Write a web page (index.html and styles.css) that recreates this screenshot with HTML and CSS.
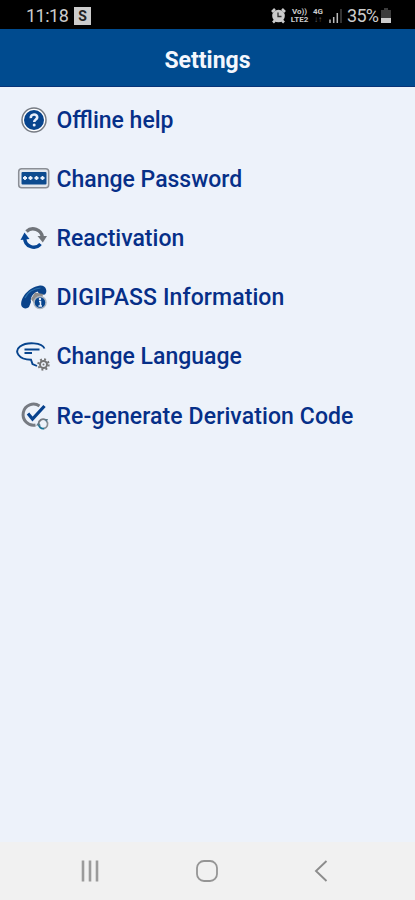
FILE: index.html
```html
<!DOCTYPE html>
<html lang="en">
<head>
	<meta charset="utf-8">
	<title>Settings</title>
	<link rel="stylesheet" href="styles.css">
</head>
<body>
	<div class="status">
		<span class="clock">11:18</span>
		<span class="badge">S</span>
		<div class="indicators">
			<svg class="alarm" width="15" height="16" viewBox="0 0 15 16">
				<path d="M1 4L4 1M14 4L11 1M2 14.500L4 12.500M13 14.500L11 12.500" stroke="#ccc" stroke-width="2.600"/>
				<circle cx="7.500" cy="8" r="6.300" fill="#ccc"/>
				<path d="M7 4.500V8.500H10.500" stroke="#333" stroke-width="1.300" fill="none"/>
			</svg>
			<div class="net volte"><span>Vo))</span><span>LTE2</span></div>
			<div class="net data"><span>4G</span><span class="dim">↓↑</span></div>
			<svg class="signal" width="13" height="15" viewBox="0 0 13 15">
				<path d="M1 11.500V15M4.700 9V15M8.300 5V15" stroke="#bbb" stroke-width="1.500"/>
				<path d="M12 1V15" stroke="#444" stroke-width="1.500"/>
			</svg>
			<span class="percent">35%</span>
			<svg width="10" height="15" viewBox="0 0 10 15">
				<path d="M3 0H7V2H10V10H0V2H3Z" fill="#3c3c3c"/>
				<path d="M0 10H10V15H0Z" fill="#ccc"/>
			</svg>
		</div>
	</div>
	<div class="header">Settings</div>
	<div class="menu">
		<div class="item">
			<svg class="icon" width="38" height="36" viewBox="0 0 38 36">
				<circle cx="19" cy="18" r="12" fill="#fff" stroke="#777c84" stroke-width="1.500"/>
				<circle cx="19" cy="18" r="10" fill="#07448d"/>
				<path d="M15.800 16.200C15.300 11.300 22.700 11.300 22.200 15.500C22 17.500 19.200 17.500 19.200 20" stroke="#e7eefa" stroke-width="2.600" fill="none"/>
				<circle cx="19.200" cy="23" r="1.500" fill="#e7eefa"/>
			</svg>
			<span class="label">Offline help</span>
		</div>
		<div class="item">
			<svg class="icon" width="38" height="36" viewBox="0 0 38 36">
				<rect x="3.700" y="7.700" width="30" height="19" rx="3" fill="#e3e8ee" stroke="#8b8f96" stroke-width="1.500"/>
				<rect x="6.500" y="11" width="25" height="12.500" rx="1" fill="#0c4b8f"/>
				<path d="M8 17H12M10 15V19M13.500 17H17.500M15.500 15V19M19.500 17H23.500M21.500 15V19M25.500 17H29.500M27.500 15V19" stroke="#e8f0fa" stroke-width="1.800"/>
			</svg>
			<span class="label">Change Password</span>
		</div>
		<div class="item">
			<svg class="icon" width="38" height="36" viewBox="0 0 38 36">
				<path d="M11.500 11.500A9.300 9.300 0 0 1 27.300 17" stroke="#70747a" stroke-width="3.400" fill="none"/>
				<path d="M22.500 16H32L27.800 22.500Z" fill="#70747a"/>
				<path d="M9.700 18A9 9 0 0 0 25.500 24" stroke="#064594" stroke-width="3.400" fill="none"/>
				<path d="M5.500 20L9.500 12.500L14.500 19Z" fill="#064594"/>
			</svg>
			<span class="label">Reactivation</span>
		</div>
		<div class="item">
			<svg class="icon" width="38" height="36" viewBox="0 0 38 36">
				<path d="M6.500 27C4.500 19 14 8 25 6.500C31 6 33 12.500 30 15.500L25 16L22.500 12.500C18 14 15 19 16 23L14 28C12 30 8 30 6.500 27Z" fill="#0a438a"/>
				<path d="M16 20L20 13.500L28 15L27 21L19 24Z" fill="#8d8c8c"/>
				<path d="M10 19C13 13 19 9.500 25.500 9" stroke="#2b70aa" stroke-width="1.200" fill="none"/>
				<circle cx="25" cy="23.500" r="6" fill="#07448d" stroke="#aab4bf" stroke-width="1.500"/>
				<path d="M24 22.500H25.500V27M23.500 27H27" stroke="#e7eefa" stroke-width="1.500" fill="none"/>
				<circle cx="25" cy="20" r="1.200" fill="#e7eefa"/>
			</svg>
			<span class="label wide">DIGIPASS Information</span>
		</div>
		<div class="item">
			<svg class="icon" width="38" height="36" viewBox="0 0 38 36">
				<path d="M29.500 10.500C27 4.500 12 3.500 5 8.500C-1 13 3 21.500 16 21.800L17.500 26L22 28" stroke="#07448d" stroke-width="1.900" fill="none"/>
				<path d="M9.500 11.500H24.500M9.500 15H17" stroke="#07448d" stroke-width="1.800"/>
				<circle cx="28.500" cy="26.500" r="3.500" fill="none" stroke="#747474" stroke-width="2"/>
				<circle cx="28.500" cy="26.500" r="5.200" fill="none" stroke="#747474" stroke-width="2" stroke-dasharray="1.900 2.180"/>
				<circle cx="28.500" cy="26.500" r="1" fill="#747474"/>
			</svg>
			<span class="label">Change Language</span>
		</div>
		<div class="item">
			<svg class="icon" width="38" height="36" viewBox="0 0 38 36">
				<path d="M24.500 8A10.500 10.500 0 1 0 20.500 27" stroke="#777b82" stroke-width="3" fill="none"/>
				<path d="M13 15.500L17.500 21L29.500 8" stroke="#07418d" stroke-width="3.200" fill="none"/>
				<path d="M23.500 26A4.700 4.700 0 0 1 30.500 21.800" stroke="#777b82" stroke-width="1.800" fill="none"/>
				<path d="M32 23.500A4.700 4.700 0 0 1 29 30.500" stroke="#888e94" stroke-width="1.800" fill="none"/>
				<path d="M29 30.500A4.700 4.700 0 0 1 23.500 26" stroke="#197295" stroke-width="1.800" fill="none"/>
				<path d="M29 21L33 21L31.500 24.500ZM21 27.500L23.500 24.500L26 27.500Z" fill="#5b7888"/>
			</svg>
			<span class="label wide">Re-generate Derivation Code</span>
		</div>
	</div>
	<div class="navbar">
		<svg width="20" height="22" viewBox="0 0 20 22">
			<path d="M3 0.500V21.500M10 0.500V21.500M17 0.500V21.500" stroke="#9b9b9b" stroke-width="2.600"/>
		</svg>
		<svg width="22" height="22" viewBox="0 0 22 22">
			<rect x="1" y="1" width="20" height="20" rx="7" fill="none" stroke="#959595" stroke-width="1.800"/>
		</svg>
		<svg width="14" height="22" viewBox="0 0 14 22">
			<path d="M12.500 1L2 11L12.500 21" fill="none" stroke="#8c8c8c" stroke-width="1.900"/>
		</svg>
	</div>
</body>
</html>
```

FILE: styles.css
```css
body
{
	margin: 0;
	height: 900px;
	display: flex;
	flex-direction: column;
	overflow: hidden;
	background-color: #edf2fa;
	font-family: Roboto, "Liberation Sans", sans-serif;
}
.status
{
	height: 29px;
	padding: 2px 24px 0 26px;
	box-sizing: border-box;
	display: flex;
	align-items: center;
	background-color: #000;
	color: #ccc;
}
.clock
{
	width: 48px;
	font-size: 18px;
	letter-spacing: -0.5px;
}
.badge
{
	width: 17px;
	height: 18px;
	line-height: 18px;
	text-align: center;
	font-size: 14px;
	font-weight: bold;
	background-color: #ccc;
	color: #222;
}
.indicators
{
	margin-left: auto;
	display: flex;
	align-items: center;
}
.net
{
	display: flex;
	flex-direction: column;
	align-items: center;
	font-size: 8px;
	line-height: 8px;
	font-weight: bold;
}
.volte
{
	width: 19px;
	margin-left: 4px;
}
.data
{
	width: 12px;
	margin-left: 3px;
}
.dim
{
	color: #666;
}
.signal
{
	margin: 0 5px 0 5px;
}
.percent
{
	width: 33px;
	margin-right: 1px;
	font-size: 18px;
	letter-spacing: -0.7px;
}
.header
{
	height: 58px;
	padding-top: 5px;
	box-sizing: border-box;
	border-bottom: 1px solid #073478;
	display: flex;
	align-items: center;
	justify-content: center;
	background-color: #004b8f;
	color: #f4f7fd;
	font-size: 23px;
	font-weight: bold;
}
.menu
{
	flex: 1;
	padding: 3px 0 0 15px;
}
.item
{
	height: 59.2px;
	display: flex;
	align-items: center;
}
.icon
{
	margin-right: 3.5px;
}
.label
{
	padding-top: 1px;
	color: #062f88;
	font-size: 23px;
	font-weight: 500;
	white-space: nowrap;
}
.wide
{
	letter-spacing: 0.1px;
}
.navbar
{
	height: 58px;
	padding: 0 87px 0 80px;
	box-sizing: border-box;
	display: flex;
	align-items: center;
	justify-content: space-between;
	background-color: #f1f1f1;
}
```
